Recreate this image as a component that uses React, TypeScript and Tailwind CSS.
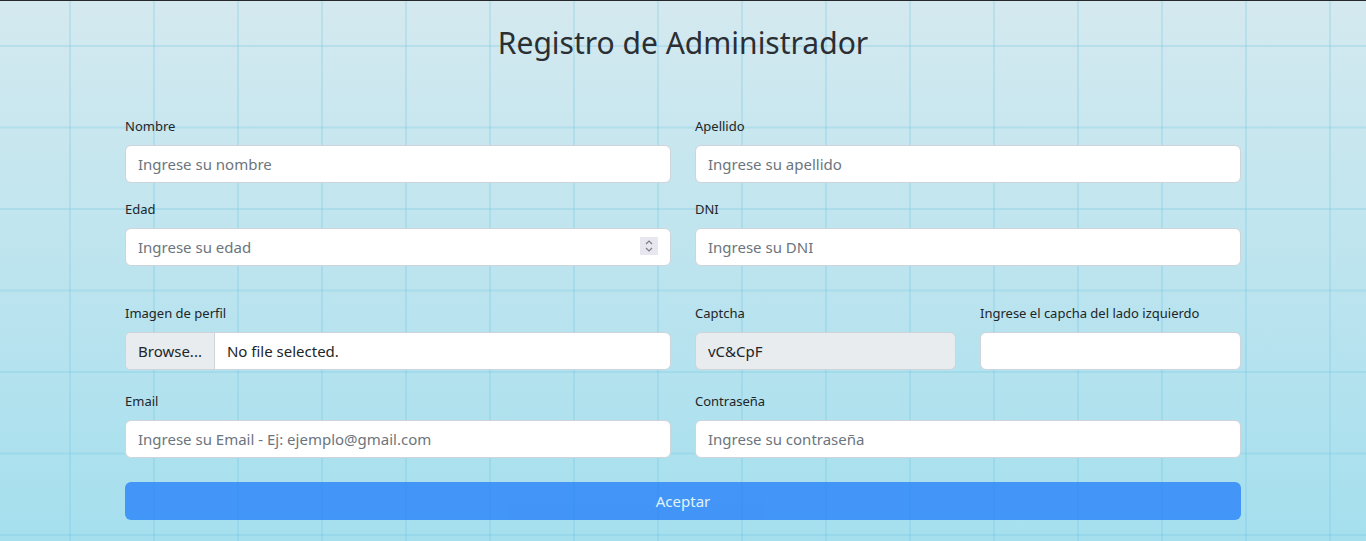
import React from 'react';

const font = { fontFamily: '"Noto Sans", "Open Sans", sans-serif' };

function Label({ children }: { children: React.ReactNode }) {
  return <label className="mb-2 block text-[13px] leading-[21px] text-[#212529]">{children}</label>;
}

function TextField({ label, placeholder }: { label: string; placeholder: string }) {
  return (
    <div>
      <Label>{label}</Label>
      <input
        type="text"
        placeholder={placeholder}
        className="block h-[38px] w-full rounded-[6px] border border-[#ced4da] bg-white px-3 text-[15px] text-[#212529] outline-none placeholder:text-[#6c757d]"
      />
    </div>
  );
}

export default function App() {
  return (
    <div
      style={font}
      className="min-h-screen border-t border-[#25272b] bg-[linear-gradient(to_right,rgba(110,195,225,0.26)_0_2px,transparent_2px),linear-gradient(to_bottom,rgba(110,195,225,0.26)_0_2px,transparent_2px),linear-gradient(to_bottom,#d4e9ef,#a5dfee)] bg-size-[84px_100%,100%_81.5px,100%_100%] bg-position-[69px_0,0_44px,0_0]"
    >
      <div className="mx-auto w-[1140px] px-3">
        <h1 className="pt-[23px] text-center text-[30px] leading-[38px] font-normal text-[#2b2f33]">
          Registro de Administrador
        </h1>

        <form className="mt-[54px]">
          {/* nombre / apellido */}
          <div className="grid grid-cols-2 gap-x-6">
            <TextField label="Nombre" placeholder="Ingrese su nombre" />
            <TextField label="Apellido" placeholder="Ingrese su apellido" />
          </div>

          {/* edad / dni */}
          <div className="mt-4 grid grid-cols-2 gap-x-6">
            <div>
              <Label>Edad</Label>
              <div className="relative">
                <input
                  type="text"
                  placeholder="Ingrese su edad"
                  className="block h-[38px] w-full rounded-[6px] border border-[#ced4da] bg-white px-3 text-[15px] text-[#212529] outline-none placeholder:text-[#6c757d]"
                />
                <div className="absolute right-[13px] top-[9px] flex h-[18px] w-[18px] items-center justify-center bg-[#e8e6ee]">
                  <svg width="10" height="14" viewBox="0 0 10 14" fill="none" stroke="#7a7f87" strokeWidth="1.2">
                    <path d="M2 5 L5 2 L8 5" />
                    <path d="M2 9 L5 12 L8 9" />
                  </svg>
                </div>
              </div>
            </div>
            <TextField label="DNI" placeholder="Ingrese su DNI" />
          </div>

          {/* imagen / captcha */}
          <div className="mt-[37px] grid grid-cols-4 gap-x-6">
            <div className="col-span-2">
              <Label>Imagen de perfil</Label>
              <div className="flex h-[38px] w-full overflow-hidden rounded-[6px] border border-[#ced4da] bg-white text-[15px] text-[#212529]">
                <span className="flex items-center border-r border-[#ced4da] bg-[#e9ecef] px-3">Browse...</span>
                <span className="flex items-center px-3">No file selected.</span>
              </div>
            </div>
            <div>
              <Label>Captcha</Label>
              <input
                type="text"
                readOnly
                value="vC&CpF"
                className="block h-[38px] w-full rounded-[6px] border border-[#ced4da] bg-[#e9ecef] px-3 text-[15px] text-[#212529] outline-none"
              />
            </div>
            <div>
              <Label>Ingrese el capcha del lado izquierdo</Label>
              <input
                type="text"
                className="block h-[38px] w-full rounded-[6px] border border-[#ced4da] bg-white px-3 text-[15px] text-[#212529] outline-none"
              />
            </div>
          </div>

          {/* email / contraseña */}
          <div className="mt-[21px] grid grid-cols-2 gap-x-6">
            <TextField label="Email" placeholder="Ingrese su Email - Ej: ejemplo@gmail.com" />
            <TextField label="Contraseña" placeholder="Ingrese su contraseña" />
          </div>

          <button
            type="button"
            disabled
            className="mt-6 block h-[38px] w-full rounded-[6px] bg-[#0d6efd] text-[15px] text-white opacity-65"
          >
            Aceptar
          </button>
        </form>
      </div>
    </div>
  );
}
